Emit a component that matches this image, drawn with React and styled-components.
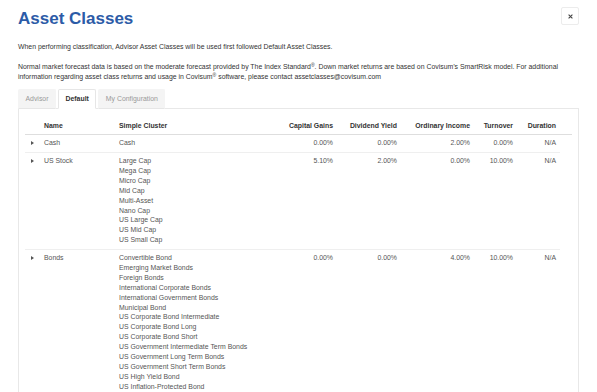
import React from "react";
import styled, { createGlobalStyle } from "styled-components";

const Global = createGlobalStyle`
  html, body { margin: 0; padding: 0; background: #fff; }
  body { font-family: "Liberation Sans", Helvetica, Arial, sans-serif; color: #333; }
`;

const Page = styled.div`
  padding: 8px 18px 0 18px;
`;

const Header = styled.div`
  display: flex;
  justify-content: space-between;
  align-items: flex-start;
`;

const Title = styled.h1`
  margin: 0;
  font-size: 17px;
  line-height: 22px;
  font-weight: 700;
  color: #2c5ba7;
`;

const CloseButton = styled.button`
  width: 18px;
  height: 18px;
  margin-top: -1px;
  padding: 0;
  border: 1px solid #ececec;
  border-radius: 2px;
  background: #fff;
  display: flex;
  align-items: center;
  justify-content: center;
  color: #444;
`;

const Para = styled.p`
  margin: ${(p) => p.$mt}px 0 0 0;
  font-size: 6.9px;
  line-height: 10px;
  color: #333;
`;

const Sup = styled.sup`
  font-size: 5px;
  line-height: 0;
  vertical-align: 2.5px;
`;

const Tabs = styled.div`
  display: flex;
  gap: 2px;
  margin-top: 7px;
`;

const Tab = styled.div`
  position: relative;
  z-index: ${(p) => (p.$active ? 1 : 0)};
  padding: 4px 6.5px;
  font-size: 6.9px;
  line-height: 10px;
  margin-bottom: -1px;
  border: 1px solid ${(p) => (p.$active ? "#e6e6e6" : "#f4f4f4")};
  border-bottom-color: ${(p) => (p.$active ? "#fff" : "#e6e6e6")};
  border-radius: 2px 2px 0 0;
  background: ${(p) => (p.$active ? "#fff" : "#f4f4f4")};
  color: ${(p) => (p.$active ? "#333" : "#999")};
  font-weight: ${(p) => (p.$active ? 700 : 400)};
`;

const Panel = styled.div`
  border: 1px solid #e8e8e8;
  padding: 11.5px 6px 0 6px;
  min-height: 300px;
`;

const cols = "15px 75px 145px 77px 64px 73px 43px 43px";

const HeadRow = styled.div`
  display: grid;
  grid-template-columns: ${cols};
  padding-right: 12px;
  border-bottom: 1px solid #dedede;
`;

const HeadCell = styled.div`
  padding: 0 4px 3px 4px;
  font-size: 6.9px;
  line-height: 10px;
  font-weight: 700;
  color: #333;
  white-space: nowrap;
  text-align: ${(p) => (p.$right ? "right" : "left")};
`;

const Row = styled.div`
  display: grid;
  grid-template-columns: ${cols};
  margin-right: 12px;
  border-bottom: 1px solid #efefef;
`;

const Cell = styled.div`
  padding: 3.6px 4px 3.6px 4px;
  font-size: 6.9px;
  line-height: 9.88px;
  color: #555;
  white-space: nowrap;
  text-align: ${(p) => (p.$right ? "right" : "left")};
`;

const ArrowCell = styled.div`
  padding: 3.6px 0;
  display: flex;
  justify-content: center;
  align-items: flex-start;
`;

const Arrow = styled.span`
  display: block;
  width: 0;
  height: 0;
  margin-top: 3px;
  border-left: 3px solid #555;
  border-top: 2px solid transparent;
  border-bottom: 2px solid transparent;
`;

const ClusterLine = styled.div``;

const rows = [
  { name: "Cash", clusters: ["Cash"], v: ["0.00%", "0.00%", "2.00%", "0.00%", "N/A"] },
  {
    name: "US Stock",
    clusters: ["Large Cap", "Mega Cap", "Micro Cap", "Mid Cap", "Multi-Asset", "Nano Cap", "US Large Cap", "US Mid Cap", "US Small Cap"],
    v: ["5.10%", "2.00%", "0.00%", "10.00%", "N/A"],
  },
  {
    name: "Bonds",
    clusters: [
      "Convertible Bond",
      "Emerging Market Bonds",
      "Foreign Bonds",
      "International Corporate Bonds",
      "International Government Bonds",
      "Municipal Bond",
      "US Corporate Bond Intermediate",
      "US Corporate Bond Long",
      "US Corporate Bond Short",
      "US Government Intermediate Term Bonds",
      "US Government Long Term Bonds",
      "US Government Short Term Bonds",
      "US High Yield Bond",
      "US Inflation-Protected Bond",
      "US Mortgage Bond",
    ],
    v: ["0.00%", "0.00%", "4.00%", "10.00%", "N/A"],
  },
];

const heads = ["Capital Gains", "Dividend Yield", "Ordinary Income", "Turnover", "Duration"];

export default function App() {
  return (
    <>
      <Global />
      <Page>
        <Header>
          <Title>Asset Classes</Title>
          <CloseButton aria-label="Close">
            <svg width="5" height="5" viewBox="0 0 5 5">
              <path d="M0.6 0.6 L4.4 4.4 M4.4 0.6 L0.6 4.4" stroke="#444" strokeWidth="1.1" />
            </svg>
          </CloseButton>
        </Header>
        <Para $mt={12}>
          When performing classification, Advisor Asset Classes will be used first followed Default Asset Classes.
        </Para>
        <Para $mt={10}>
          Normal market forecast data is based on the moderate forecast provided by The Index Standard<Sup>®</Sup>. Down
          market returns are based on Covisum’s SmartRisk model. For additional information regarding asset class
          returns and usage in Covisum<Sup>®</Sup> software, please contact assetclasses@covisum.com
        </Para>
        <Tabs>
          <Tab>Advisor</Tab>
          <Tab $active>Default</Tab>
          <Tab>My Configuration</Tab>
        </Tabs>
        <Panel>
          <HeadRow>
            <HeadCell />
            <HeadCell>Name</HeadCell>
            <HeadCell>Simple Cluster</HeadCell>
            {heads.map((h) => (
              <HeadCell key={h} $right>
                {h}
              </HeadCell>
            ))}
          </HeadRow>
          {rows.map((r) => (
            <Row key={r.name}>
              <ArrowCell>
                <Arrow />
              </ArrowCell>
              <Cell>{r.name}</Cell>
              <Cell>
                {r.clusters.map((c) => (
                  <ClusterLine key={c}>{c}</ClusterLine>
                ))}
              </Cell>
              {r.v.map((val, i) => (
                <Cell key={i} $right>
                  {val}
                </Cell>
              ))}
            </Row>
          ))}
        </Panel>
      </Page>
    </>
  );
}
